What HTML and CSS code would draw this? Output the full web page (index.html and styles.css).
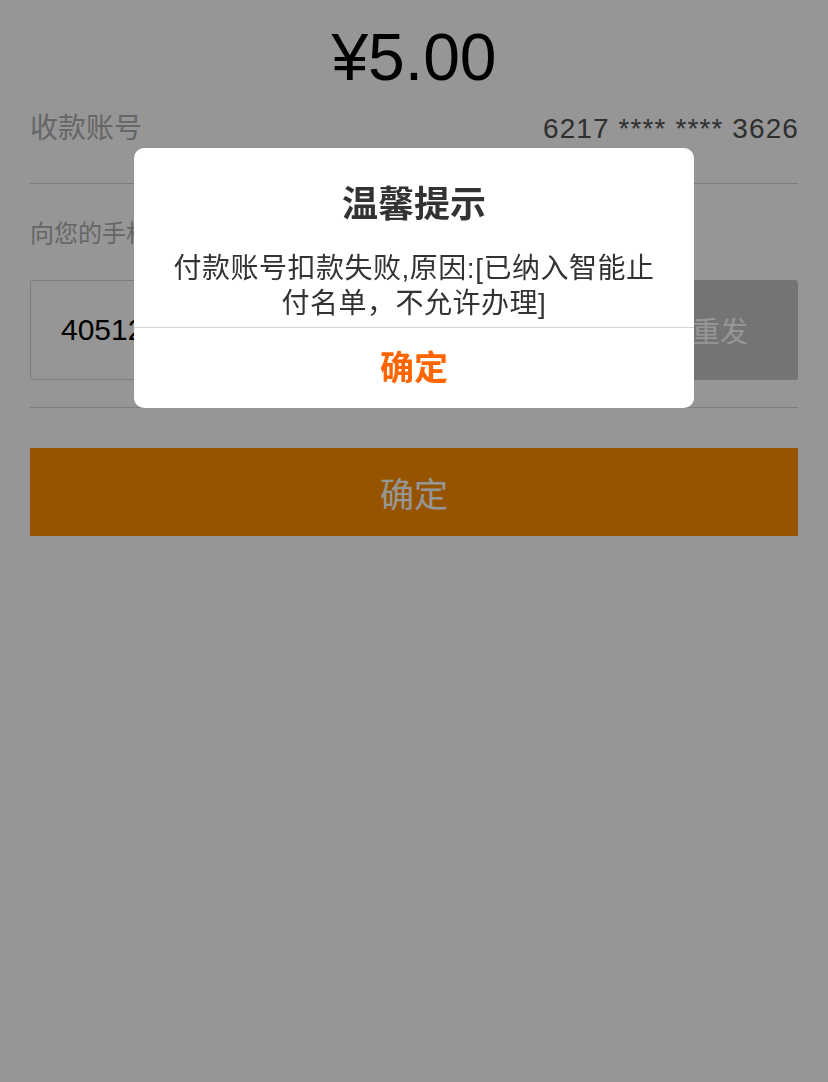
FILE: index.html
```html
<!DOCTYPE html>
<html lang="zh-CN">
<head>
<meta charset="utf-8">
<title>确认付款</title>
<link rel="stylesheet" href="styles.css">
</head>
<body>
<div class="page">
  <div class="amount">¥5.00</div>
  <div class="row-account">
    <span class="label">收款账号</span>
    <span class="card">6217 **** **** 3626</span>
  </div>
  <div class="verify">
    <div class="tip">向您的手机发送验证码</div>
    <div class="code-line">
      <div class="code-input">405128</div>
      <button class="resend">重发</button>
    </div>
  </div>
  <button class="submit">确定</button>
</div>
<div class="mask"></div>
<div class="dialog">
  <div class="dlg-title">温馨提示</div>
  <div class="dlg-msg">付款账号扣款失败,原因:[已纳入智能止付名单，不允许办理]</div>
  <div class="dlg-btn">确定</div>
</div>
</body>
</html>
```
FILE: styles.css
```css
* { box-sizing: border-box; }
html, body {
  margin: 0;
  background: #fff;
  font-family: "Liberation Sans", "Noto Sans CJK SC", sans-serif;
}
.page {
  padding: 0 30px;
  height: 1082px;
}
.amount {
  padding-top: 17px;
  font-size: 66px;
  line-height: 80px;
  text-align: center;
  color: #000;
}
.row-account {
  display: flex;
  justify-content: space-between;
  align-items: baseline;
  padding: 12px 0 34px;
  border-bottom: 1px solid #d4d4d4;
  line-height: 40px;
}
.label {
  font-size: 28px;
  color: #adadad;
}
.card {
  font-size: 28px;
  letter-spacing: 1.1px;
  margin-right: -1px;
  color: #505050;
}
.verify {
  padding: 33px 0 27px;
  border-bottom: 1px solid #d4d4d4;
}
.tip {
  font-size: 24px;
  line-height: 34px;
  color: #adadad;
}
.code-line {
  display: flex;
  gap: 14px;
  margin-top: 29px;
  height: 100px;
}
.code-input {
  flex: 1;
  border: 1px solid #d4d4d4;
  border-radius: 3px;
  padding-left: 30px;
  font-size: 30px;
  line-height: 98px;
  color: #000;
}
.resend {
  width: 156px;
  border: 0;
  border-radius: 3px;
  background: #c6c6c6;
  color: #fff;
  font-family: inherit;
  font-size: 28px;
  padding: 0;
}
.submit {
  display: block;
  width: 100%;
  height: 88px;
  margin-top: 40px;
  border: 0;
  padding: 0;
  background: #ff9000;
  color: #fff;
  font-family: inherit;
  font-size: 34px;
}
.mask {
  position: fixed;
  left: 0;
  top: 0;
  right: 0;
  bottom: 0;
  background: rgba(0, 0, 0, 0.41);
  z-index: 1;
}
.dialog {
  position: absolute;
  top: 148px;
  left: 50%;
  margin-left: -280px;
  width: 560px;
  background: #fff;
  border-radius: 10px;
  overflow: hidden;
  z-index: 2;
}
.dlg-title {
  padding-top: 32px;
  font-size: 36px;
  font-weight: bold;
  line-height: 50px;
  text-align: center;
  color: #333;
}
.dlg-msg {
  margin-top: 21px;
  padding: 0 37px 6px;
  font-size: 28px;
  line-height: 35px;
  letter-spacing: 0.5px;
  text-align: center;
  color: #333;
}
.dlg-btn {
  border-top: 1px solid #d5d5d5;
  height: 81px;
  line-height: 80px;
  text-align: center;
  font-size: 34px;
  font-weight: bold;
  color: #ff6600;
}
```
